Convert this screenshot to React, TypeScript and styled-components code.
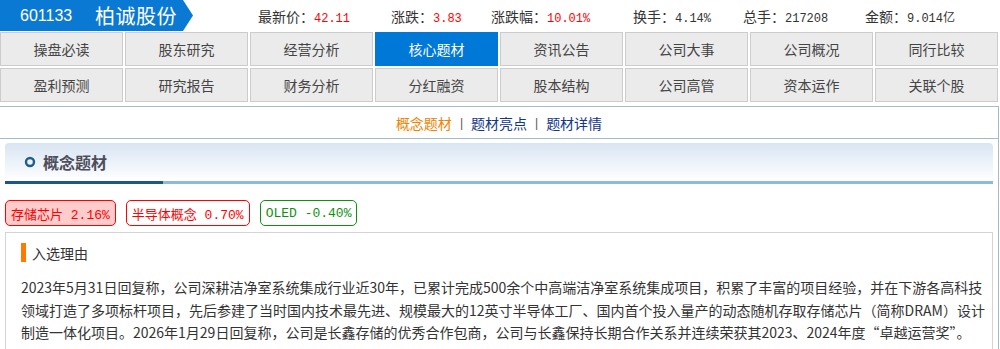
import React from "react";
import styled, { createGlobalStyle } from "styled-components";

const GlobalStyle = createGlobalStyle`
  html, body {
    margin: 0;
    padding: 0;
    background: #fff;
  }
  body {
    font-family: "Liberation Sans", "Noto Sans CJK SC", sans-serif;
    font-size: 14px;
    color: #333;
  }
`;

const Page = styled.div`
  width: 1000px;
  height: 349px;
  overflow: hidden;
`;

const Header = styled.div`
  display: flex;
  align-items: center;
  height: 32px;
`;

const StockTag = styled.div`
  display: flex;
  align-items: center;
  width: 193px;
  height: 31px;
  align-self: flex-start;
  background: #0a79d3;
  color: #fff;
  clip-path: polygon(0 0, 183px 0, 193px 50%, 183px 100%, 0 100%);
`;

const Code = styled.span`
  margin-left: 20px;
  font-size: 16px;
  width: 75px;
`;

const Name = styled.span`
  font-size: 20px;
  letter-spacing: 0.5px;
`;

const Stats = styled.div`
  display: grid;
  grid-template-columns: 133px 100px 142px 110px 122px auto;
  margin-left: 65px;
  font-size: 14px;
  color: #333;
`;

const Stat = styled.span`
  white-space: nowrap;
`;

const Value = styled.span<{ $red?: boolean }>`
  font-family: "Liberation Mono", "Noto Sans CJK SC", monospace;
  font-size: 12px;
  color: ${(p) => (p.$red ? "#f00" : "#333")};
`;

const Nav = styled.div`
  display: grid;
  grid-template-columns: repeat(8, 123px);
  grid-auto-rows: 34px;
  column-gap: 2px;
  row-gap: 2px;
`;

const NavItem = styled.div<{ $active?: boolean }>`
  display: flex;
  align-items: center;
  justify-content: center;
  box-sizing: border-box;
  border: 1px solid ${(p) => (p.$active ? "#0078d7" : "#cccccc")};
  background: ${(p) => (p.$active ? "#0078d7" : "#ebebeb")};
  color: ${(p) => (p.$active ? "#fff" : "#444")};
  font-size: 14px;
`;

const Panel = styled.div`
  margin-top: 4px;
  width: 999px;
  box-sizing: border-box;
  border-top: 1px solid #a3bccc;
  border-right: 1px solid #a3bccc;
  height: 243px;
`;

const SubTabs = styled.div`
  display: flex;
  align-items: center;
  justify-content: center;
  gap: 8px;
  height: 31px;
  border-bottom: 1px solid #a3bccc;
  font-size: 14px;
`;

const SubTab = styled.span<{ $current?: boolean }>`
  color: ${(p) => (p.$current ? "#f08300" : "#13368a")};
`;

const Sep = styled.span`
  color: #555;
  font-size: 12px;
`;

const SectionHead = styled.div`
  margin: 4px 5px 0 5px;
  height: 38px;
  display: flex;
  align-items: center;
  gap: 7px;
  padding-left: 19px;
  border-radius: 4px 4px 0 0;
  background: linear-gradient(#d8e5f3, #ffffff);
`;

const SectionLine = styled.div`
  margin: 0 5px;
  height: 3px;
  background: linear-gradient(to right, #1c5886 0, #1c5886 158px, #8cbad9 158px);
`;

const SectionTitle = styled.span`
  font-size: 16px;
  font-weight: bold;
  color: #4d4d5c;
`;

const Tags = styled.div`
  display: flex;
  gap: 10px;
  margin: 16px 5px 0;
`;

const ConceptTag = styled.span<{ $tone: "hot" | "up" | "down" }>`
  display: inline-flex;
  align-items: center;
  height: 26px;
  box-sizing: border-box;
  padding: 0 5px;
  border-radius: 5px;
  border: 1px solid ${(p) => (p.$tone === "down" ? "#109010" : "#f00")};
  background: ${(p) => (p.$tone === "hot" ? "#ffcccc" : "#fff")};
  color: ${(p) => (p.$tone === "down" ? "#109010" : "#f00")};
  font-family: "Liberation Mono", "Noto Sans CJK SC", monospace;
  font-size: 13px;
  white-space: pre;
`;

const ReasonBox = styled.div`
  margin: 6px 5px 0;
  border: 1px solid #d4d4d4;
  border-bottom: none;
  padding: 10px 0 0 15px;
  height: 120px;
`;

const ReasonTitle = styled.div`
  display: flex;
  align-items: center;
  gap: 6px;
  height: 19px;
  font-size: 14px;
  color: #333;
  &::before {
    content: "";
    width: 5px;
    height: 19px;
    background: #ff7a00;
  }
`;

const Paragraph = styled.div`
  margin-top: 14px;
  font-family: "Noto Sans CJK SC", "Liberation Sans", sans-serif;
  font-size: 14px;
  line-height: 22.5px;
  color: #333;
`;

const Line = styled.span`
  display: block;
  white-space: nowrap;
`;

const navItems = [
  "操盘必读", "股东研究", "经营分析", "核心题材", "资讯公告", "公司大事", "公司概况", "同行比较",
  "盈利预测", "研究报告", "财务分析", "分红融资", "股本结构", "公司高管", "资本运作", "关联个股",
];

const stats: { label: string; value: string; red?: boolean }[] = [
  { label: "最新价：", value: "42.11", red: true },
  { label: "涨跌：", value: "3.83", red: true },
  { label: "涨跌幅：", value: "10.01%", red: true },
  { label: "换手：", value: "4.14%" },
  { label: "总手：", value: "217208" },
  { label: "金额：", value: "9.014亿" },
];

const App: React.FC = () => {
  return (
    <Page>
      <GlobalStyle />
      <Header>
        <StockTag>
          <Code>601133</Code>
          <Name>柏诚股份</Name>
        </StockTag>
        <Stats>
          {stats.map((s) => (
            <Stat key={s.label}>
              {s.label}
              <Value $red={s.red}>{s.value}</Value>
            </Stat>
          ))}
        </Stats>
      </Header>
      <Nav>
        {navItems.map((n) => (
          <NavItem key={n} $active={n === "核心题材"}>
            {n}
          </NavItem>
        ))}
      </Nav>
      <Panel>
        <SubTabs>
          <SubTab $current>概念题材</SubTab>
          <Sep>|</Sep>
          <SubTab>题材亮点</SubTab>
          <Sep>|</Sep>
          <SubTab>题材详情</SubTab>
        </SubTabs>
        <SectionHead>
          <svg width="12" height="12" viewBox="0 0 12 12">
            <circle cx="6" cy="6" r="4" fill="none" stroke="#1f5d8c" strokeWidth="2.4" />
          </svg>
          <SectionTitle>概念题材</SectionTitle>
        </SectionHead>
        <SectionLine />
        <Tags>
          <ConceptTag $tone="hot">存储芯片 2.16%</ConceptTag>
          <ConceptTag $tone="up">半导体概念 0.70%</ConceptTag>
          <ConceptTag $tone="down">OLED -0.40%</ConceptTag>
        </Tags>
        <ReasonBox>
          <ReasonTitle>入选理由</ReasonTitle>
          <Paragraph>
            <Line>
              2023年5月31日回复称，公司深耕洁净室系统集成行业近30年，已累计完成500余个中高端洁净室系统集成项目，积累了丰富的项目经验，并在下游各高科技
            </Line>
            <Line>
              领域打造了多项标杆项目，先后参建了当时国内技术最先进、规模最大的12英寸半导体工厂、国内首个投入量产的动态随机存取存储芯片（简称DRAM）设计
            </Line>
            <Line>
              制造一体化项目。2026年1月29日回复称，公司是长鑫存储的优秀合作包商，公司与长鑫保持长期合作关系并连续荣获其2023、2024年度“卓越运营奖”。
            </Line>
          </Paragraph>
        </ReasonBox>
      </Panel>
    </Page>
  );
};

export default App;
